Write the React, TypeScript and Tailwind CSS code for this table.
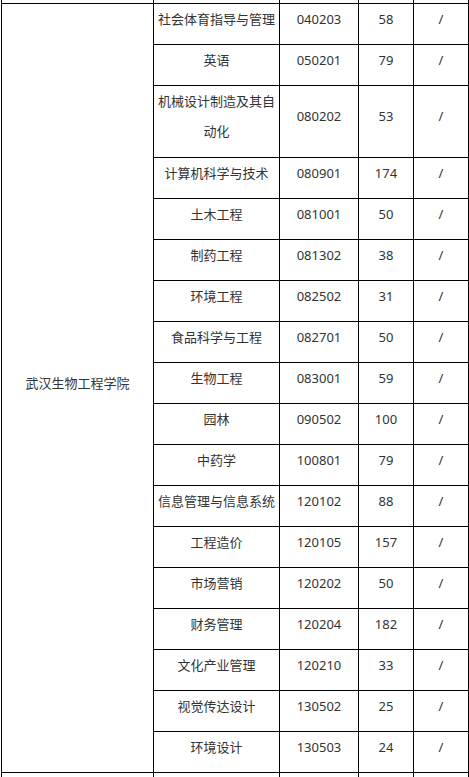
const rows = [
  { name: "社会体育指导与管理", code: "040203", num: "58" },
  { name: "英语", code: "050201", num: "79" },
  { name: "机械设计制造及其自动化", code: "080202", num: "53" },
  { name: "计算机科学与技术", code: "080901", num: "174" },
  { name: "土木工程", code: "081001", num: "50" },
  { name: "制药工程", code: "081302", num: "38" },
  { name: "环境工程", code: "082502", num: "31" },
  { name: "食品科学与工程", code: "082701", num: "50" },
  { name: "生物工程", code: "083001", num: "59" },
  { name: "园林", code: "090502", num: "100" },
  { name: "中药学", code: "100801", num: "79" },
  { name: "信息管理与信息系统", code: "120102", num: "88" },
  { name: "工程造价", code: "120105", num: "157" },
  { name: "市场营销", code: "120202", num: "50" },
  { name: "财务管理", code: "120204", num: "182" },
  { name: "文化产业管理", code: "120210", num: "33" },
  { name: "视觉传达设计", code: "130502", num: "25" },
  { name: "环境设计", code: "130503", num: "24" },
]

const cell = "flex items-center justify-center bg-white text-center pb-[11px] px-[3px]"

export default function App() {
  return (
    <div className="w-[469px] h-[777px] overflow-hidden bg-white">
      <div
        className="ml-[1px] w-[468px] grid gap-px bg-black px-px text-[13px] leading-[30px] text-[#333]"
        style={{
          fontFamily: '"Noto Sans", "Noto Sans CJK SC", sans-serif',
          gridTemplateColumns: "151px 125px 78px 54px 54px",
          gridTemplateRows: "3px 40px 40px 71px repeat(15, 40px) 4px",
        }}
      >
        {/* tail of the row above */}
        <div className="bg-white" />
        <div className="bg-white" />
        <div className="bg-white" />
        <div className="bg-white" />
        <div className="bg-white" />

        <div className="flex items-center justify-center bg-white text-center px-[3px] row-span-18 pb-[10px]">
          武汉生物工程学院
        </div>
        {rows.map((r) => (
          <div key={r.code} className="contents">
            <div className={cell}>{r.name}</div>
            <div className={cell}>{r.code}</div>
            <div className={cell}>{r.num}</div>
            <div className={cell}>/</div>
          </div>
        ))}

        {/* start of the next row */}
        <div className="bg-white" />
        <div className="bg-white" />
        <div className="bg-white" />
        <div className="bg-white" />
        <div className="bg-white" />
      </div>
    </div>
  )
}
